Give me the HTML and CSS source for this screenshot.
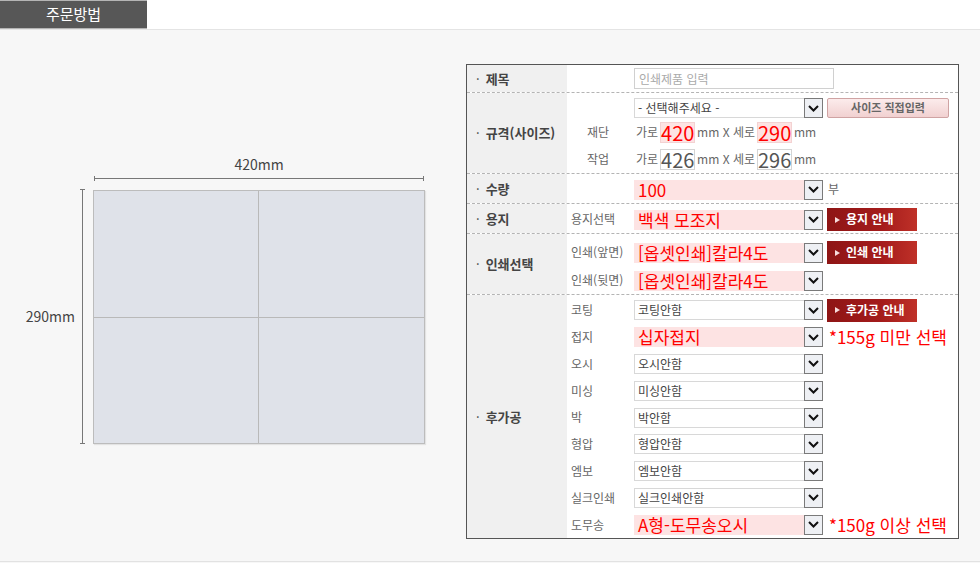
FILE: index.html
```html
<!DOCTYPE html>
<html lang="ko">
  <head>
    <meta charset="UTF-8" />
    <meta name="viewport" content="width=device-width, initial-scale=1.0" />
    <title>주문방법</title>
    <link rel="stylesheet" href="styles.css">
  </head>
  <body>
    <div class="top">
      <div class="tab">주문방법</div>
    </div>
    <div class="main">
      <div class="figure">
        <div class="vdim">
          <span class="vlabel">290mm</span>
          <span class="vline"></span>
        </div>
        <div class="hcol">
          <div class="hlabel">420mm</div>
          <div class="hline"></div>
          <div class="sheet">
            <div></div><div></div><div></div><div></div>
          </div>
        </div>
      </div>

      <div class="order">
        <div class="row r-title">
          <div class="th">제목</div>
          <div class="td">
            <div class="line"><span class="sub"></span><div class="input">인쇄제품 입력</div></div>
          </div>
        </div>

        <div class="row r-size">
          <div class="th">규격(사이즈)</div>
          <div class="td">
            <div class="line l1">
              <span class="sub"></span>
              <div class="sel"><span class="val">- 선택해주세요 -</span><span class="arr"><svg width="11" height="7" viewBox="0 0 11 7"><path d="M1 1l4.5 4.5L10 1"/></svg></span></div>
              <div class="btn-size">사이즈 직접입력</div>
            </div>
            <div class="line l2">
              <span class="sub ind">재단</span>
              <span class="txt">가로</span><span class="num hot">420</span><span class="txt">mm X 세로</span><span class="num hot">290</span><span class="txt">mm</span>
            </div>
            <div class="line l2">
              <span class="sub ind">작업</span>
              <span class="txt">가로</span><span class="num">426</span><span class="txt">mm X 세로</span><span class="num">296</span><span class="txt">mm</span>
            </div>
          </div>
        </div>

        <div class="row r-qty">
          <div class="th">수량</div>
          <div class="td">
            <div class="line">
              <span class="sub"></span>
              <div class="sel hot"><span class="val">100</span><span class="arr"><svg width="11" height="7" viewBox="0 0 11 7"><path d="M1 1l4.5 4.5L10 1"/></svg></span></div>
              <span class="unit">부</span>
            </div>
          </div>
        </div>

        <div class="row r-paper">
          <div class="th">용지</div>
          <div class="td">
            <div class="line">
              <span class="sub">용지선택</span>
              <div class="sel hot"><span class="val">백색 모조지</span><span class="arr"><svg width="11" height="7" viewBox="0 0 11 7"><path d="M1 1l4.5 4.5L10 1"/></svg></span></div>
              <div class="btn-red">용지 안내</div>
            </div>
          </div>
        </div>

        <div class="row r-print">
          <div class="th">인쇄선택</div>
          <div class="td">
            <div class="line l1">
              <span class="sub">인쇄(앞면)</span>
              <div class="sel hot"><span class="val">[옵셋인쇄]칼라4도</span><span class="arr"><svg width="11" height="7" viewBox="0 0 11 7"><path d="M1 1l4.5 4.5L10 1"/></svg></span></div>
              <div class="btn-red">인쇄 안내</div>
            </div>
            <div class="line l2">
              <span class="sub">인쇄(뒷면)</span>
              <div class="sel hot"><span class="val">[옵셋인쇄]칼라4도</span><span class="arr"><svg width="11" height="7" viewBox="0 0 11 7"><path d="M1 1l4.5 4.5L10 1"/></svg></span></div>
            </div>
          </div>
        </div>

        <div class="row r-post">
          <div class="th">후가공</div>
          <div class="td">
            <div class="line">
              <span class="sub">코팅</span>
              <div class="sel"><span class="val">코팅안함</span><span class="arr"><svg width="11" height="7" viewBox="0 0 11 7"><path d="M1 1l4.5 4.5L10 1"/></svg></span></div>
              <div class="btn-red">후가공 안내</div>
            </div>
            <div class="line">
              <span class="sub">접지</span>
              <div class="sel hot"><span class="val">십자접지</span><span class="arr"><svg width="11" height="7" viewBox="0 0 11 7"><path d="M1 1l4.5 4.5L10 1"/></svg></span></div>
              <span class="note">*155g 미만 선택</span>
            </div>
            <div class="line">
              <span class="sub">오시</span>
              <div class="sel"><span class="val">오시안함</span><span class="arr"><svg width="11" height="7" viewBox="0 0 11 7"><path d="M1 1l4.5 4.5L10 1"/></svg></span></div>
            </div>
            <div class="line">
              <span class="sub">미싱</span>
              <div class="sel"><span class="val">미싱안함</span><span class="arr"><svg width="11" height="7" viewBox="0 0 11 7"><path d="M1 1l4.5 4.5L10 1"/></svg></span></div>
            </div>
            <div class="line">
              <span class="sub">박</span>
              <div class="sel"><span class="val">박안함</span><span class="arr"><svg width="11" height="7" viewBox="0 0 11 7"><path d="M1 1l4.5 4.5L10 1"/></svg></span></div>
            </div>
            <div class="line">
              <span class="sub">형압</span>
              <div class="sel"><span class="val">형압안함</span><span class="arr"><svg width="11" height="7" viewBox="0 0 11 7"><path d="M1 1l4.5 4.5L10 1"/></svg></span></div>
            </div>
            <div class="line">
              <span class="sub">엠보</span>
              <div class="sel"><span class="val">엠보안함</span><span class="arr"><svg width="11" height="7" viewBox="0 0 11 7"><path d="M1 1l4.5 4.5L10 1"/></svg></span></div>
            </div>
            <div class="line">
              <span class="sub">실크인쇄</span>
              <div class="sel"><span class="val">실크인쇄안함</span><span class="arr"><svg width="11" height="7" viewBox="0 0 11 7"><path d="M1 1l4.5 4.5L10 1"/></svg></span></div>
            </div>
            <div class="line">
              <span class="sub">도무송</span>
              <div class="sel hot"><span class="val">A형-도무송오시</span><span class="arr"><svg width="11" height="7" viewBox="0 0 11 7"><path d="M1 1l4.5 4.5L10 1"/></svg></span></div>
              <span class="note">*150g 이상 선택</span>
            </div>
          </div>
        </div>
      </div>
    </div>
  </body>
</html>
```

FILE: styles.css
```css
*{
  box-sizing: border-box;
}
body{
  margin: 0;
  background-color: #f7f7f7;
  font-family: "Noto Sans CJK KR", "Noto Sans", sans-serif;
  font-size: 12px;
  line-height: 1.2;
  color: #555;
}
.top{
  height: 30px;
  background-color: #fff;
  border-bottom: 1px solid #e4e4e4;
}
.tab{
  width: 147px;
  height: 29px;
  background-color: #575757;
  border-top: 1px solid #b4b4b4;
  border-bottom: 1px solid #b4b4b4;
  color: #fff;
  font-size: 15px;
  line-height: 26px;
  text-align: center;
}
.main{
  display: flex;
  align-items: flex-start;
  height: 532px;
  border-bottom: 1px solid #e2e2e2;
}

/* paper figure */
.figure{
  display: flex;
  align-items: flex-end;
  width: 425px;
  padding-top: 125px;
}
.vdim{
  display: flex;
  align-items: center;
  height: 255px;
}
.vlabel{
  width: 75px;
  text-align: right;
  font-size: 14px;
  color: #444;
}
.vline{
  width: 5px;
  height: 255px;
  margin-left: 5px;
  margin-right: 8px;
  border-top: 1px solid #777;
  border-bottom: 1px solid #777;
  background: linear-gradient(#777, #777) center / 1px 100% no-repeat;
}
.hcol{
  width: 332px;
}
.hlabel{
  text-align: center;
  font-size: 14px;
  line-height: 18px;
  color: #444;
  margin-bottom: 3px;
}
.hline{
  height: 5px;
  margin: 0 1px 9px 1px;
  border-left: 1px solid #777;
  border-right: 1px solid #777;
  background: linear-gradient(#777, #777) center / 100% 1px no-repeat;
}
.sheet{
  display: grid;
  grid-template-columns: 164px 165px;
  grid-template-rows: 126px 125px;
  gap: 1px;
  width: 332px;
  height: 254px;
  border: 1px solid #bcbcbc;
  background-color: #b9b9b9;
  box-shadow: 1px 1px 1px rgba(0, 0, 0, 0.08);
}
.sheet div{
  background-color: #dfe2e9;
}

/* order table */
.order{
  width: 493px;
  margin-top: 34px;
  margin-left: 41px;
  border: 1px solid #555;
  background-color: #fff;
}
.row{
  display: flex;
  border-bottom: 1px dashed #b4b4b4;
}
.row:last-child{
  border-bottom: none;
}
.th{
  width: 100px;
  flex-shrink: 0;
  display: flex;
  align-items: center;
  padding-left: 9px;
  background-color: #f0f0f0;
  font-size: 13px;
  font-weight: bold;
  color: #444;
}
.th::before{
  content: "·";
  margin-right: 6px;
  font-weight: normal;
}
.td{
  flex: 1;
  padding-left: 4px;
}
.line{
  display: flex;
  align-items: center;
}
.sub{
  width: 63px;
  flex-shrink: 0;
  color: #666;
}
.sub.ind{
  padding-left: 16px;
}

.r-title{ height: 28px; }
.r-title .line{ height: 27px; }
.r-size{ height: 81px; }
.r-size .td{ padding-top: 4px; }
.r-size .l1{ height: 22px; }
.r-size .l2{ height: 27px; }
.r-qty, .r-paper{ height: 30px; }
.r-qty .td, .r-paper .td{ padding-top: 1px; }
.r-qty .line, .r-paper .line{ height: 29px; }
.r-print{ height: 61px; }
.r-print .td{ padding-top: 4px; }
.r-print .l1{ height: 29px; }
.r-print .l2{ height: 27px; }
.r-post{ height: 243px; }
.r-post .td{ padding-top: 2px; }
.r-post .line{ height: 26.8px; }

.input{
  width: 200px;
  height: 21px;
  padding-left: 4px;
  border: 1px solid #d0d0d0;
  color: #aaa;
  line-height: 19px;
}
.sel{
  display: flex;
  width: 189px;
  height: 20px;
}
.val{
  flex: 1;
  padding-left: 3px;
  border: 1px solid #d8d8d8;
  border-right: none;
  background-color: #fff;
  color: #444;
  line-height: 18px;
  white-space: nowrap;
}
.sel.hot .val{
  border-color: #fde3e3;
  background-color: #fde3e3;
  color: #f00;
  font-size: 17px;
}
.arr{
  display: flex;
  align-items: center;
  justify-content: center;
  width: 19px;
  border: 1px solid #7a7a7a;
  background-color: #eef0f4;
}
.arr path{
  fill: none;
  stroke: #111;
  stroke-width: 2;
}
.txt{
  margin: 0 2px;
  font-size: 12px;
  color: #666;
}
.num{
  width: 35px;
  height: 21px;
  border: 1px solid #d4d4d4;
  font-size: 20px;
  line-height: 19px;
  text-align: center;
  color: #555;
}
.num.hot{
  border-color: #f3d2d2;
  background-color: #fde3e3;
  color: #f00;
}
.unit{
  margin-left: 5px;
  color: #666;
}
.note{
  margin-left: 6px;
  font-size: 17px;
  color: #f00;
}
.btn-size{
  display: flex;
  align-items: center;
  justify-content: center;
  width: 122px;
  height: 20px;
  margin-left: 4px;
  border: 1px solid #cfa3a3;
  border-radius: 2px;
  background: linear-gradient(#fcecec, #f1d1d1);
  color: #666;
  font-size: 11px;
  font-weight: bold;
}
.btn-red{
  display: flex;
  align-items: center;
  width: 90px;
  height: 23px;
  margin-left: 4px;
  padding-left: 8px;
  background: linear-gradient(90deg, #8e1515, #a41b1b 60%, #bf3128);
  color: #fff;
  font-size: 12px;
  font-weight: bold;
}
.btn-red::before{
  content: "";
  margin-right: 6px;
  border-left: 5px solid #f6dcdc;
  border-top: 3px solid transparent;
  border-bottom: 3px solid transparent;
}
```
